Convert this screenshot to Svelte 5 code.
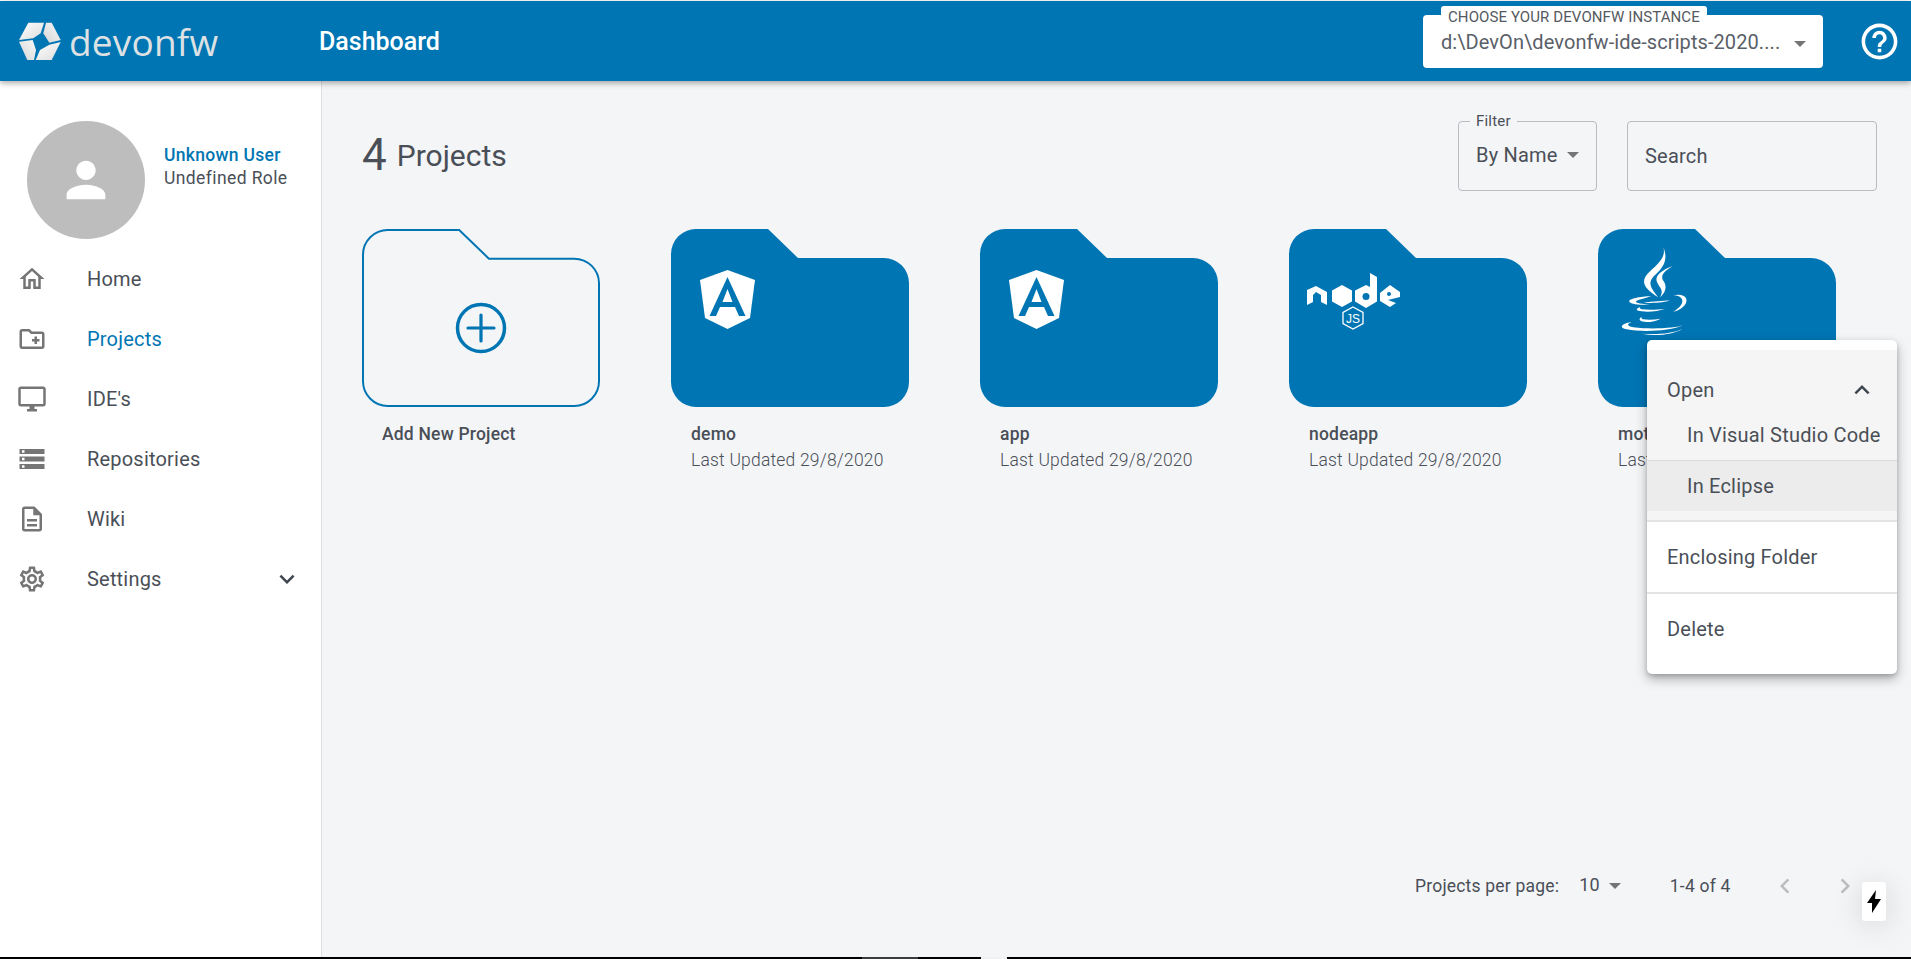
<script>
  const nav = [
    { label: 'Home', icon: 'home' },
    { label: 'Projects', icon: 'folder', active: true },
    { label: "IDE's", icon: 'desktop' },
    { label: 'Repositories', icon: 'storage' },
    { label: 'Wiki', icon: 'doc' },
    { label: 'Settings', icon: 'gear', more: true }
  ];
  const projects = [
    { name: 'demo', logo: 'angular' },
    { name: 'app', logo: 'angular' },
    { name: 'nodeapp', logo: 'node' },
    { name: 'motorcycle', logo: 'java' }
  ];
  const folderPath = 'M25 0H97L127 29H213A25 25 0 0 1 238 54V153A25 25 0 0 1 213 178H25A25 25 0 0 1 0 153V25A25 25 0 0 1 25 0Z';
</script>

<div class="page">
  <header class="topbar">
    <div class="brand">
      <svg class="brand-mark" viewBox="0 0 44 39" width="44" height="39">
        <defs>
          <linearGradient id="mark-a" x1="0" y1="0" x2="1" y2="1">
            <stop offset="0" stop-color="#ffffff" />
            <stop offset="1" stop-color="#dcdcdc" />
          </linearGradient>
          <linearGradient id="mark-b" x1="1" y1="0" x2="0" y2="1">
            <stop offset="0" stop-color="#f8f8f8" />
            <stop offset="1" stop-color="#d6d6d6" />
          </linearGradient>
        </defs>
        <path d="M10.300 .7H26L22.700 11.300 15.300 16.300 1 18Z" fill="url(#mark-a)" />
        <path d="M28 .7H33.700L42.700 18 31.300 20.700 25.300 11.300Z" fill="url(#mark-b)" />
        <path d="M1 19.700 14.700 18 18 28 16 38H9.300Z" fill="url(#mark-b)" />
        <path d="M31.300 22.700 42.700 20 33.700 38H17.700L22 28Z" fill="url(#mark-a)" />
      </svg>
      <span class="brand-name">devonfw</span>
    </div>
    <h1 class="page-name">Dashboard</h1>
    <div class="instance">
      <span class="instance-label">CHOOSE YOUR DEVONFW INSTANCE</span>
      <span class="instance-value">d:\DevOn\devonfw-ide-scripts-2020....</span>
      <span class="caret"></span>
    </div>
    <svg class="help" viewBox="0 0 24 24" width="43" height="43" fill="#fff">
      <path d="M11 18h2v-2h-2v2zm1-16C6.480 2 2 6.480 2 12s4.480 10 10 10 10-4.480 10-10S17.520 2 12 2zm0 18c-4.410 0-8-3.590-8-8s3.590-8 8-8 8 3.590 8 8-3.590 8-8 8zm0-14c-2.210 0-4 1.790-4 4h2c0-1.100.9-2 2-2s2 .9 2 2c0 2-3 1.750-3 5h2c0-2.250 3-2.500 3-5 0-2.210-1.790-4-4-4z" />
    </svg>
  </header>

  <div class="body">
    <aside class="sidebar">
      <div class="user">
        <div class="avatar">
          <svg viewBox="0 0 24 24" width="58" height="58" fill="#fff">
            <path d="M12 12c2.210 0 4-1.790 4-4s-1.790-4-4-4-4 1.790-4 4 1.790 4 4 4zm0 2c-2.670 0-8 1.340-8 4v2h16v-2c0-2.660-5.330-4-8-4z" />
          </svg>
        </div>
        <div class="user-text">
          <div class="user-name">Unknown User</div>
          <div class="user-role">Undefined Role</div>
        </div>
      </div>
      <nav>
        {#each nav as item}
          <div class="nav-item" class:active={item.active}>
            <svg class="nav-icon" viewBox="0 0 24 24" width="30" height="30" fill="#757575">
              {#if item.icon === 'home'}
                <path d="M12 5.690l5 4.500V18h-2v-6H9v6H7v-7.810l5-4.500M12 3L2 12h3v8h6v-6h2v6h6v-8h3L12 3z" />
              {:else if item.icon === 'folder'}
                <path d="M20 6h-8l-2-2H4c-1.100 0-1.990.9-1.990 2L2 18c0 1.100.9 2 2 2h16c1.100 0 2-.9 2-2V8c0-1.100-.9-2-2-2zm0 12H4V6h5.170l2 2H20v10zm-8-4h2v2h2v-2h2v-2h-2v-2h-2v2h-2v2z" />
              {:else if item.icon === 'desktop'}
                <path d="M21 2H3c-1.100 0-2 .9-2 2v12c0 1.100.9 2 2 2h7v2H8v2h8v-2h-2v-2h7c1.100 0 2-.9 2-2V4c0-1.100-.9-2-2-2zm0 14H3V4h18v12z" />
              {:else if item.icon === 'storage'}
                <path d="M2 20h20v-4H2v4zm2-3h2v2H4v-2zM2 4v4h20V4H2zm4 3H4V5h2v2zm-4 7h20v-4H2v4zm2-3h2v2H4v-2z" />
              {:else if item.icon === 'doc'}
                <path d="M8 16h8v2H8zm0-4h8v2H8zm6-10H6c-1.100 0-2 .9-2 2v16c0 1.100.89 2 1.990 2H18c1.100 0 2-.9 2-2V8l-6-6zm4 18H6V4h7v5h5v11z" />
              {:else}
                <path d="M19.430 12.980c.04-.32.07-.64.07-.98s-.03-.66-.07-.98l2.110-1.650c.19-.15.24-.42.12-.64l-2-3.460c-.12-.22-.39-.3-.61-.22l-2.490 1c-.52-.4-1.080-.73-1.690-.98l-.38-2.650C14.460 2.180 14.250 2 14 2h-4c-.25 0-.46.18-.49.42l-.38 2.650c-.61.25-1.170.59-1.690.98l-2.490-1c-.23-.09-.49 0-.61.22l-2 3.460c-.13.22-.07.49.12.64l2.110 1.650c-.04.32-.07.65-.07.98s.03.66.07.98l-2.110 1.650c-.19.15-.24.42-.12.64l2 3.460c.12.22.39.3.61.22l2.490-1c.52.4 1.080.73 1.690.98l.38 2.650c.03.24.24.42.49.42h4c.25 0 .46-.18.49-.42l.38-2.650c.61-.25 1.170-.59 1.690-.98l2.490 1c.23.09.49 0 .61-.22l2-3.460c.12-.22.07-.49-.12-.64l-2.110-1.650zM17.450 11.270c.04.31.05.52.05.73s-.02.43-.05.73l-.14 1.130.89.7 1.080.84-.7 1.210-1.270-.51-1.040-.42-.9.68c-.43.32-.84.56-1.250.73l-1.060.43-.16 1.130-.2 1.350h-1.400l-.19-1.350-.16-1.130-1.060-.43c-.43-.18-.83-.41-1.230-.71l-.91-.7-1.060.43-1.270.51-.7-1.210 1.080-.84.89-.7-.14-1.130c-.03-.31-.05-.54-.05-.74s.02-.43.05-.73l.14-1.130-.89-.7-1.080-.84.7-1.210 1.270.51 1.040.42.9-.68c.43-.32.84-.56 1.250-.73l1.060-.43.16-1.130.2-1.350h1.390l.19 1.350.16 1.130 1.060.43c.43.18.83.41 1.230.71l.91.7 1.060-.43 1.270-.51.7 1.210-1.070.85-.89.7.14 1.130zM12 8c-2.210 0-4 1.790-4 4s1.790 4 4 4 4-1.790 4-4-1.790-4-4-4zm0 6c-1.100 0-2-.9-2-2s.9-2 2-2 2 .9 2 2-.9 2-2 2z" />
              {/if}
            </svg>
            <span class="nav-label">{item.label}</span>
            {#if item.more}
              <svg class="nav-more" viewBox="0 0 24 24" width="30" height="30" fill="#3f4650">
                <path d="M16.590 8.590L12 13.170 7.410 8.590 6 10l6 6 6-6z" />
              </svg>
            {/if}
          </div>
        {/each}
      </nav>
    </aside>

    <main class="content">
      <div class="toolbar">
        <h2 class="count"><span class="count-num">4</span> Projects</h2>
        <div class="filters">
          <div class="field filter">
            <span class="field-label">Filter</span>
            <span class="field-value">By Name</span>
            <span class="caret"></span>
          </div>
          <div class="field search">Search</div>
        </div>
      </div>

      <div class="cards">
        <div class="card">
          <svg class="folder" viewBox="-1 -1 240 180" width="240" height="180">
            <path d={folderPath} transform="translate(1 1) scale(.9916 .9888)" fill="none" stroke="#0075b3" stroke-width="2" />
            <circle cx="119" cy="99" r="23.500" fill="none" stroke="#0075b3" stroke-width="3.500" />
            <path d="M119 86v26M106 99h26" stroke="#0075b3" stroke-width="3.200" stroke-linecap="round" />
          </svg>
          <div class="card-name">Add New Project</div>
        </div>
        {#each projects as p}
          <div class="card">
            <svg class="folder" viewBox="-1 -1 240 180" width="240" height="180">
              <path d={folderPath} fill="#0075b3" />
              {#if p.logo === 'angular'}
                <g transform="translate(29 41)">
                  <path d="M27.500 0 55 10 50 48 27.500 59 5 48 0 10Z" fill="#fff" />
                  <path d="M27.500 7 9.500 46H16L20 37H35L39 46H45.500ZM22.500 32 27.500 19 32.500 32Z" fill="#0075b3" />
                </g>
              {:else if p.logo === 'node'}
                <g transform="translate(18 43)" fill="#fff">
                  <path d="M0 18 9 14 20 20V33L14 30V23L9 20 6 23V30L0 33Z" />
                  <path d="M35 13 45 18.500V29.500L35 35 25 29.500V18.500Z" />
                  <path d="M63 1 70 5V29.500L59 36 48 29.500V18.500L59 13 63 15Z" />
                  <circle cx="59" cy="24.500" r="3.500" fill="#0075b3" />
                  <path d="M73 21 83 13 93 20V25L81 28 89 31 83 35 73 29Z" />
                  <circle cx="82" cy="22" r="2" fill="#0075b3" />
                  <path d="M46 35 56 40.500V51.500L46 57 36 51.500V40.500Z" fill="none" stroke="#fff" stroke-width="1.300" />
                  <text x="46" y="50.500" class="js">JS</text>
                </g>
              {:else}
                <g transform="translate(12 9) scale(.3333)" fill="#fff">
                  <path d="M160 28C170 60 138 82 112 108 92 132 102 152 145 178 122 150 112 135 132 114 160 90 176 65 160 28Z" />
                  <path d="M188 84C158 95 134 112 140 130 146 148 164 155 150 178 176 155 166 135 158 125 152 110 165 98 188 84Z" />
                  <path d="M125 174C90 176 55 182 58 191 62 199 95 201 120 200 85 196 72 194 80 188 92 184 110 179 125 174Z" />
                  <path d="M100 194C130 196 165 194 180 187 160 190 130 190 100 194Z" />
                  <path d="M190 172C225 164 240 184 222 204 210 216 200 219 190 221 210 209 222 194 215 182 210 174 200 172 190 172Z" />
                  <path d="M90 207C75 214 78 218 95 220 120 223 145 219 165 212 140 216 115 216 95 214 90 212 88 210 90 207Z" />
                  <path d="M95 236C82 244 90 251 110 252 125 252 140 249 152 242 135 245 115 246 100 244 95 242 93 240 95 236Z" />
                  <path d="M65 252C35 256 25 269 50 274 100 284 180 279 220 262 200 269 130 276 70 268 50 264 50 258 65 252Z" />
                  <path d="M95 287C140 296 190 289 218 272 190 286 140 291 95 287Z" />
                </g>
              {/if}
            </svg>
            <div class="card-name">{p.name}</div>
            <div class="card-date">Last Updated 29/8/2020</div>
          </div>
        {/each}
      </div>

      <div class="pager">
        <span class="pager-label">Projects per page:</span>
        <span class="pager-size">10</span>
        <span class="caret"></span>
        <span class="pager-range">1-4 of 4</span>
        <svg class="pager-prev" viewBox="0 0 24 24" width="30" height="30" fill="#bdbdbd"><path d="M15.410 7.410L14 6l-6 6 6 6 1.410-1.410L10.830 12z" /></svg>
        <svg class="pager-next" viewBox="0 0 24 24" width="30" height="30" fill="#bdbdbd"><path d="M10 6L8.590 7.410 13.170 12l-4.580 4.590L10 18l6-6z" /></svg>
      </div>
    </main>
  </div>

  <div class="menu">
    <div class="menu-group">
      <div class="menu-row open">
        <span>Open</span>
        <svg viewBox="0 0 24 24" width="30" height="30" fill="#3f4650"><path d="M12 8l-6 6 1.410 1.410L12 10.830l4.590 4.580L18 14z" /></svg>
      </div>
      <div class="menu-sub first">In Visual Studio Code</div>
      <div class="menu-sub hover">In Eclipse</div>
    </div>
    <div class="menu-row plain">Enclosing Folder</div>
    <div class="menu-row plain last">Delete</div>
  </div>

  <div class="bolt">
    <svg viewBox="0 0 14 23" width="14" height="23"><path d="M9 0 0 13H5V23L14 9H8Z" fill="#000" /></svg>
  </div>
  <div class="taskbar">
    <span class="task-dark"></span>
    <span class="task-light"></span>
  </div>
</div>

<style>
  :global(body) {
    margin: 0;
    background: #f4f5f7;
  }
  :global(*) { box-sizing: border-box; }

  .page {
    position: relative;
    width: 1911px;
    height: 959px;
    overflow: hidden;
    display: flex;
    flex-direction: column;
    font-family: Roboto, sans-serif;
    letter-spacing: 0.2px;
    color: #4a4f57;
    background: #fff;
    padding-top: 1px;
  }

  /* Top bar */
  .topbar {
    height: 80px;
    flex: none;
    background: #0075b3;
    display: flex;
    align-items: center;
    position: relative;
    z-index: 2;
    box-shadow: 0 2px 6px rgba(0, 0, 0, 0.35);
    padding-left: 18px;
  }
  .brand {
    display: flex;
    align-items: center;
    width: 301px;
    gap: 7px;
  }
  .brand-mark { flex: none; }
  .brand-name {
    font-family: "Open Sans", sans-serif;
    font-size: 37px;
    color: #dde1e4;
    letter-spacing: 0.2px;
    line-height: 1;
  }
  .page-name {
    margin: 0;
    font-size: 25px;
    font-weight: 500;
    letter-spacing: 0;
    color: #fff;
    width: 1104px;
  }
  .instance {
    position: relative;
    width: 400px;
    height: 53px;
    margin-top: 1px;
    background: #fff;
    border-radius: 4px;
    display: flex;
    align-items: center;
    padding: 1px 0 0 18px;
    font-size: 20px;
    color: #5a6068;
  }
  .instance-label {
    position: absolute;
    left: 18px;
    top: -9px;
    height: 20px;
    padding: 0 7px;
    line-height: 22px;
    background: #fff;
    border-radius: 3px 3px 0 0;
    font-size: 15px;
    letter-spacing: 0.1px;
    color: #54595f;
    white-space: nowrap;
  }
  .instance-value {
    white-space: nowrap;
    letter-spacing: 0.08px;
  }
  .instance .caret { position: absolute; right: 17px; top: 26px; }
  .help { margin-left: 35px; flex: none; }

  .caret {
    display: inline-block;
    flex: none;
    width: 0;
    height: 0;
    border-left: 6px solid transparent;
    border-right: 6px solid transparent;
    border-top: 6px solid #757575;
  }

  /* Sidebar */
  .body {
    flex: 1;
    display: flex;
    min-height: 0;
  }
  .sidebar {
    width: 322px;
    flex: none;
    background: #fff;
    border-right: 1px solid #dcdfe3;
    padding-top: 40px;
  }
  .user {
    display: flex;
    padding-left: 27px;
    gap: 19px;
    height: 128px;
  }
  .avatar {
    width: 118px;
    height: 118px;
    border-radius: 50%;
    background: #bdbdbd;
    display: flex;
    align-items: center;
    justify-content: center;
  }
  .user-text {
    padding-top: 23px;
    font-size: 17.500px;
    line-height: 22.500px;
  }
  .user-name {
    color: #0075b3;
    font-weight: 500;
    letter-spacing: 0.3px;
  }
  .user-role { letter-spacing: 0.4px; }
  .nav-item {
    height: 60px;
    display: flex;
    align-items: center;
    padding-left: 17px;
    position: relative;
    font-size: 20px;
  }
  .nav-label { margin-left: 40px; }
  .nav-item.active .nav-label { color: #0075b3; }
  .nav-more { position: absolute; right: 19px; top: 15px; }

  /* Main */
  .content {
    flex: 1;
    min-width: 0;
    background: #f4f5f7;
    display: flex;
    flex-direction: column;
    padding: 40px 34px 0 40px;
  }
  .toolbar {
    display: flex;
    justify-content: space-between;
    align-items: flex-start;
    height: 108px;
  }
  .count {
    margin: 0;
    font-size: 30px;
    font-weight: 400;
    letter-spacing: 0;
    line-height: 69px;
    display: flex;
    align-items: center;
    gap: 10px;
  }
  .count-num { font-size: 44px; }
  .filters { display: flex; gap: 30px; }
  .field {
    position: relative;
    height: 70px;
    border: 1px solid #b9bcc1;
    border-radius: 4px;
    display: flex;
    align-items: center;
    font-size: 20px;
  }
  .filter {
    width: 139px;
    padding: 0 0 2px 17px;
  }
  .field-label {
    position: absolute;
    left: 11px;
    top: -9px;
    padding: 0 6px;
    line-height: 16px;
    font-size: 15px;
    background: #f4f5f7;
  }
  .filter .caret { margin-left: 9px; }
  .search {
    width: 250px;
    padding-left: 17px;
  }
  .cards {
    display: flex;
    gap: 71px;
  }
  .card {
    width: 238px;
    flex: none;
    position: relative;
  }
  .folder {
    display: block;
    margin: -1px;
  }
  .card-name {
    margin: 15px 0 0 20px;
    font-size: 17.500px;
    font-weight: 500;
    line-height: 24px;
    white-space: nowrap;
  }
  .card-date {
    margin: 2px 0 0 20px;
    font-size: 17.500px;
    font-weight: 300;
    line-height: 24px;
    white-space: nowrap;
  }
  .js {
    font-family: "Liberation Sans", sans-serif;
    font-size: 12px;
    letter-spacing: 0;
    fill: #fff;
    text-anchor: middle;
  }

  .pager {
    margin-top: auto;
    height: 60px;
    margin-bottom: 43px;
    display: flex;
    align-items: center;
    font-size: 17.500px;
    padding-left: 1053px;
    white-space: nowrap;
  }
  .pager-size { margin-left: 20px; font-size: 18px; margin-top: -4px; }
  .pager .caret { margin-left: 9px; }
  .pager-range { margin-left: 49px; }
  .pager-prev { margin-left: 39px; flex: none; }
  .pager-next { margin-left: 30px; flex: none; }

  /* Popup menu */
  .menu {
    position: absolute;
    left: 1647px;
    top: 340px;
    width: 250px;
    height: 334px;
    z-index: 3;
    background: #fff;
    border-radius: 5px;
    padding-top: 10px;
    box-shadow: 0 5px 12px rgba(0, 0, 0, 0.3), 0 2px 4px rgba(0, 0, 0, 0.15);
    font-size: 20px;
    overflow: hidden;
  }
  .menu-group {
    height: 172px;
    background: #f5f5f5;
    border-bottom: 2px solid #e3e3e3;
  }
  .menu-row {
    display: flex;
    align-items: center;
    justify-content: space-between;
    padding-left: 20px;
  }
  .menu-row.open {
    height: 60px;
    padding-top: 20px;
    padding-right: 20px;
  }
  .menu-sub {
    padding-left: 40px;
    display: flex;
    align-items: center;
  }
  .menu-sub.first {
    height: 51px;
    border-bottom: 1px solid #d9d9d9;
  }
  .menu-sub.hover {
    height: 50px;
    background: #ececec;
  }
  .menu-row.plain {
    height: 72px;
    border-bottom: 2px solid #e3e3e3;
  }
  .menu-row.plain.last {
    height: 70px;
    border-bottom: 0;
  }

  /* Overlays */
  .bolt {
    position: absolute;
    left: 1862px;
    top: 882px;
    width: 24px;
    height: 39px;
    background: #fff;
    border-radius: 3px;
    z-index: 3;
    display: flex;
    align-items: center;
    justify-content: center;
    box-shadow: 0 4px 30px rgba(0, 0, 0, 0.14);
  }
  .taskbar {
    position: absolute;
    left: 0;
    right: 0;
    bottom: 0;
    height: 2px;
    background: #000;
    z-index: 4;
    display: flex;
  }
  .task-dark {
    margin-left: 862px;
    width: 56px;
    background: #3c3c3c;
  }
  .task-light {
    margin-left: 63px;
    width: 26px;
    background: #f0f0f0;
  }
</style>
